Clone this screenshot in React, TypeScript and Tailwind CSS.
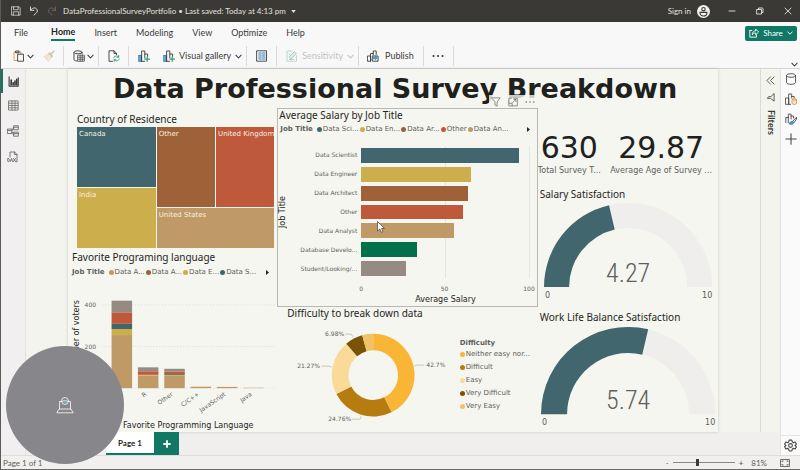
import React from "react";

const TEAL = "#41666d";
const YELLOW = "#ccae4c";
const BROWN = "#9f6138";
const RED = "#be5a3b";
const TAN = "#bf9a67";
const GREEN = "#02714b";
const GRAY = "#958b82";

type IconProps = { className?: string; children: React.ReactNode; box?: number };

function Icon({ className = "size-3", children, box = 12 }: IconProps) {
  return (
    <svg
      viewBox={`0 0 ${box} ${box}`}
      className={`${className} shrink-0`}
      fill="none"
      stroke="currentColor"
      strokeWidth="0.9"
      strokeLinecap="round"
      strokeLinejoin="round"
      aria-hidden="true"
    >
      {children}
    </svg>
  );
}

function Chevron({ className = "size-[7px]" }: { className?: string }) {
  return (
    <Icon box={8} className={className}>
      <path d="M1 2.5 4 5.7 7 2.5" strokeWidth="1.2" />
    </Icon>
  );
}

function ChartPlus() {
  return (
    <Icon>
      <rect x="0.6" y="5.5" width="3" height="5.8" fill="#5fa3d0" stroke="#3f7fae" />
      <path d="M3.6 11.3V1h3.2v7M6.8 4h2.8v2.5M3.6 11.3h3" />
      <path d="M9.2 6.8v4.6M6.9 9.1h4.6" stroke="#2f9a6c" strokeWidth="1.1" />
    </Icon>
  );
}

function TitleBar() {
  return (
    <header className="flex h-[22px] items-center bg-[#3a3936] pl-[10px] pr-2 text-[8px] text-[#e4e2de]">
      <button aria-label="Save" className="mr-2">
        <Icon className="size-[10px]">
          <path d="M1 1h8.8L11 2.2V11H1z M3 1v3.6h5.6V1 M2.8 11V7h6.4v4" />
        </Icon>
      </button>
      <button aria-label="Undo" className="mr-2">
        <Icon className="size-[10px]">
          <path d="M1.8 1.2v4h4 M2 5C4 2 7 1.6 8.8 3.2s1.6 4-.2 5.4L6 11" strokeWidth="1.1" />
        </Icon>
      </button>
      <button aria-label="Redo" className="mr-[6px] text-[#6b6a67]">
        <Icon className="size-[10px]">
          <path d="M10.2 1.2v4h-4 M10 5C8 2 5 1.6 3.2 3.2s-1.6 4 .2 5.4L6 11" strokeWidth="1.1" />
        </Icon>
      </button>
      <button className="flex items-center gap-[5px] whitespace-nowrap">
        <span>DataProfessionalSurveyPortfolio • Last saved: Today at 4:13 pm</span>
        <svg viewBox="0 0 6 4" className="h-[3px] w-[5px]" aria-hidden="true">
          <path d="M0 0h6L3 4z" fill="currentColor" />
        </svg>
      </button>
      <button className="ml-auto flex items-center gap-[6px]">
        <span>Sign in</span>
        <svg viewBox="0 0 13 13" className="size-[13px]" aria-hidden="true">
          <circle cx="6.5" cy="6.5" r="6.5" fill="#f4f3f0" />
          <circle cx="6.5" cy="4.2" r="1.7" fill="none" stroke="#3a3936" strokeWidth="1.1" />
          <path d="M3 7.4h7c0 2.4-1.5 3.6-3.5 3.6S3 9.8 3 7.4z" fill="none" stroke="#3a3936" strokeWidth="1.1" />
        </svg>
      </button>
      <button aria-label="Minimize" className="ml-[18px]">
        <Icon className="size-2" box={8}>
          <path d="M1 4h6" />
        </Icon>
      </button>
      <button aria-label="Restore" className="ml-5">
        <Icon className="size-2" box={8}>
          <path d="M1 2.5h4.500V7H1z M2.5 2.5V1h4A.6.6 0 0 1 7 1.500v4H5.500" />
        </Icon>
      </button>
      <button aria-label="Close" className="ml-5">
        <Icon className="size-2" box={8}>
          <path d="M1 1l6 6M7 1 1 7" />
        </Icon>
      </button>
    </header>
  );
}

function RibbonTabs() {
  return (
    <div className="flex h-[22px] items-center bg-[#f8f8f9] pl-[13px] pr-[3px] text-[9px] text-[#3b3a38]">
      <nav className="flex gap-[19px]">
        <button>File</button>
        <button className="ml-1 border-b-2 border-[#117865] font-bold text-[#252423]">Home</button>
        <button>Insert</button>
        <button>Modeling</button>
        <button>View</button>
        <button>Optimize</button>
        <button>Help</button>
      </nav>
      <button className="ml-auto flex h-[15px] w-[52px] items-center justify-center gap-1 rounded-xs bg-[#117865] text-[8px] text-white">
        <Icon className="size-[10px]">
          <path d="M1 3v8h8V8.500M1 3h2.500M4 8c0-3 1.500-4.500 4-4.500V1.200L11.500 4.800 8 8.200V6C6 6 5 6.500 4 8z" strokeWidth="1.1" />
        </Icon>
        Share
        <Chevron className="size-[6px]" />
      </button>
    </div>
  );
}

function Group({ className, children }: { className: string; children: React.ReactNode }) {
  return <div className={`flex h-5 items-center border-r border-[#dcdbd9] ${className}`}>{children}</div>;
}

function Ribbon() {
  return (
    <div className="flex h-[25px] items-center border-b border-[#d5d4d1] bg-[#f8f8f9] text-[9px] text-[#3b3a38]">
      <Group className="gap-[9px] pl-3 pr-2">
        <button aria-label="Paste" className="flex items-center gap-[2px]">
          <Icon>
            <path d="M4.500 10.500H1V2h7v2" stroke="#d8953f" />
            <path d="M3 1h3v1.800H3z M5 4.200h5.500v7H5z" />
          </Icon>
          <Chevron />
        </button>
        <button aria-label="Format painter">
          <Icon>
            <path d="M11 1 8 4M6.500 3l3 3M5.500 3.800l3.200 3.200" stroke="#c6c4bf" strokeWidth="1.3" />
            <path d="M5.300 4.200 1 6.500l4.300 4.800L8.300 7.200z M3 8l2-1" stroke="#e6d8b9" fill="#f5ead2" />
          </Icon>
        </button>
      </Group>
      <Group className="pl-[9px] pr-1">
        <button aria-label="Get data" className="flex items-center gap-[2px]">
          <Icon>
            <path d="M1 2.500v7C1 10.500 2.500 11 4 11M9 4V2.500" />
            <ellipse cx="5" cy="2.3" rx="4" ry="1.5" />
            <path d="M5 5.200h6.400v6H5zM5 7.200h6.400M5 9.200h6.400M7.200 5.200v6M9.300 5.200v6" strokeWidth="0.7" />
          </Icon>
          <Chevron />
        </button>
      </Group>
      <Group className="pl-[9px] pr-2">
        <button aria-label="Refresh">
          <Icon>
            <path d="M4.500 11.300H1V.8h5L8.500 3.300V4.500M6 .8v2.700h2.500" />
            <path d="M5.800 7.600C6.500 5.500 9.500 5.300 10.700 7.200V5.500M11.200 9c-.7 2.200-3.700 2.500-5 .7v1.600M10.700 7.200H9M6.200 9.700h1.700" stroke="#2f9a6c" />
          </Icon>
        </button>
      </Group>
      <Group className="gap-[13px] pl-[9px] pr-1">
        <button aria-label="New visual">
          <ChartPlus />
        </button>
        <button className="flex items-center gap-1">
          <ChartPlus />
          Visual gallery
          <Chevron />
        </button>
      </Group>
      <Group className="pl-[9px] pr-2">
        <button aria-label="Text box">
          <Icon>
            <path d="M1 .8h9.500v10.400H1z" />
            <path d="M2.800 3h2.400M6.500 3H9M2.800 5h2.400M6.500 5H9M2.800 7h2.400M6.500 7H9M2.800 9h2.400M6.500 9H9" stroke="#2c7cb5" strokeWidth="1.2" />
          </Icon>
        </button>
      </Group>
      <Group className="pl-[9px] pr-1 text-[#c3c2c0]">
        <button disabled className="flex items-center gap-1">
          <Icon>
            <path d="M10.500 5.500v5.700H1V1h5" stroke="#b5d6c9" />
            <path d="M3.200 6.800 8.500 1.500l2 2-5.300 5.300zM3 4l1.500 1.500M3.500 9.500h4" stroke="#a5cdbd" fill="#dcebe5" />
          </Icon>
          Sensitivity
          <Chevron />
        </button>
      </Group>
      <Group className="pl-2 pr-[9px]">
        <button className="flex items-center gap-[6px]">
          <Icon>
            <path d="M.8 6h2.700v5.200H.8zM3.500 11.200V3.500h2.700M6.200 5V1h3v3.500" />
            <path d="M5.700 6h5.400v5.200H5.700z" />
            <path d="M4.800 9.800c.2-2 1.500-2.800 3.400-2.800V5.600l2.300 2.300L8.200 10V8.700c-1.500 0-2.500.2-3.400 1.100z" fill="#4b9ec9" stroke="#37799c" strokeWidth="0.5" />
          </Icon>
          Publish
        </button>
      </Group>
      <Group className="pl-2 pr-[9px]">
        <button aria-label="More options">
          <Icon>
            <path d="M1.500 6h.1M6 6h.1M10.500 6h.1" strokeWidth="2" />
          </Icon>
        </button>
      </Group>
      <button aria-label="Collapse ribbon" className="ml-auto mr-[2px] self-end">
        <Chevron />
      </button>
    </div>
  );
}

function LeftRail() {
  return (
    <nav className="flex w-[25px] shrink-0 flex-col items-center gap-[14px] border-r border-[#e4e2e1] bg-[#f1efef] text-[#6d6b69]">
      <div className="flex h-[24px] w-full items-center border-l-2 border-[#117865] pl-[5px]">
        <button aria-label="Report view" className="text-[#3b3a38]">
          <Icon className="size-[11px]">
            <path d="M1.200 1v10h10V2" strokeWidth="1.2" />
            <path d="M3.500 9.500v-5M5.600 9.500v-2M7.600 9.500V5.500M9.600 9.500V3.500" strokeWidth="1.8" />
          </Icon>
        </button>
      </div>
      <button aria-label="Table view" className="-mt-[7px]">
        <Icon className="size-[11px]">
          <path d="M1 1h10v10H1zM1 3.500h10M1 6h10M1 8.500h10M4.300 1v10M7.700 1v10" />
        </Icon>
      </button>
      <button aria-label="Model view">
        <Icon className="size-3">
          <path d="M.8 4h4v4.500h-4zM.8 5.500h4M7 .8h4.300v4H7zM7 2.200h4.300M7 7.200h4.300v4H7zM7 8.600h4.300M4.800 5H6V2.800h1M4.800 7.500H6v2h1" />
        </Icon>
      </button>
      <button aria-label="DAX query view">
        <Icon className="size-3">
          <path d="M3 6V1h4.500L10 3.500V10.800H9M7.500 1v2.500H10" />
          <path d="M.8 7.500v3h.8c1.600 0 1.600-3 0-3zM3.500 10.500l1-3 1 3M6.500 7.500l2 3M8.500 7.500l-2 3" />
        </Icon>
      </button>
    </nav>
  );
}

function Legend({ items, className = "" }: { items: [string, string][]; className?: string }) {
  return (
    <div className={`flex items-center text-[7px] leading-[10px] text-[#605e5c] ${className}`}>
      <b className="mr-1 whitespace-nowrap">Job Title</b>
      <ul className="flex flex-1 gap-px">
        {items.map(([label, color], i) => (
          <li key={i} className="flex items-center whitespace-nowrap">
            <i className="mr-px size-[5px] rounded-full" style={{ backgroundColor: color }} />
            {label}
          </li>
        ))}
      </ul>
      <button aria-label="Next legend items">
        <svg viewBox="0 0 3 5" className="h-[5px] w-[3px]" aria-hidden="true">
          <path d="M0 0l3 2.500L0 5z" fill="#252423" />
        </svg>
      </button>
    </div>
  );
}

const visualTitle = "font-['Noto_Sans',sans-serif] text-[10px] leading-[12px] text-[#252423] whitespace-nowrap";

function Treemap() {
  const cell = "pl-[2px] pt-[2px]";
  return (
    <section className="pl-[9px] pr-[3px] pt-[7px]">
      <h2 className={visualTitle}>Country of Residence</h2>
      <div className="mt-[2px] grid h-[121px] grid-cols-[79fr_118fr] gap-px text-[7px] leading-[10px] text-[#f3efe2]">
        <div className="grid grid-rows-2 gap-px">
          <div className={`${cell} bg-[#41666d]`}>Canada</div>
          <div className={`${cell} bg-[#ccae4c]`}>India</div>
        </div>
        <div className="grid grid-rows-[2fr_1fr] gap-px">
          <div className="grid grid-cols-2 gap-px">
            <div className={`${cell} bg-[#9f6138]`}>Other</div>
            <div className={`${cell} whitespace-nowrap bg-[#be5a3b]`}>United Kingdom</div>
          </div>
          <div className={`${cell} bg-[#bf9a67]`}>United States</div>
        </div>
      </div>
    </section>
  );
}

const LANGUAGES: { name: string; parts: [number, string][] }[] = [
  { name: "Python", parts: [[255, TAN], [29, YELLOW], [25, TEAL], [55, RED], [56, GRAY]] },
  { name: "R", parts: [[60, TAN], [4, YELLOW], [17, RED], [19, GRAY]] },
  { name: "Other", parts: [[59, TAN], [4, YELLOW], [4, TEAL], [12, RED], [14, GRAY]] },
  { name: "C/C++", parts: [[7, TAN]] },
  { name: "JavaScript", parts: [[6, TAN]] },
  { name: "Java", parts: [[2, TAN]] },
];

function LanguageChart() {
  const base = 111;
  const unit = 0.208;
  return (
    <section>
      <h2 className={`${visualTitle} mt-[3px] pl-1`}>Favorite Programing language</h2>
      <Legend
        className="mt-1 pl-1 pr-2"
        items={[["Data A...", TAN], ["Data A...", BROWN], ["Data E...", YELLOW], ["Data S...", TEAL]]}
      />
      <svg viewBox="0 0 209 153" className="block w-full" fontSize="6" fill="#605e5c">
        {[0, 200, 400].map((v) => (
          <g key={v}>
            <line x1="34" x2="206" y1={base - v * unit} y2={base - v * unit} stroke="#d6d5cf" strokeWidth="0.7" strokeDasharray="1 2" />
            <text x="28" y={base - v * unit + 2} textAnchor="end">{v}</text>
          </g>
        ))}
        {LANGUAGES.map((lang, i) => {
          let sum = 0;
          const x = 43.5 + i * 26.3;
          return (
            <g key={lang.name}>
              {lang.parts.map(([v, color], k) => {
                sum += v;
                return <rect key={k} x={x} y={base - sum * unit} width="20.5" height={v * unit} fill={color} />;
              })}
              <text transform={`translate(${x + 9} ${base + 7}) rotate(-35)`} textAnchor="end">{lang.name}</text>
            </g>
          );
        })}
        <text transform="translate(11 58) rotate(-90)" textAnchor="middle" fontSize="8" fill="#252423">Number of voters</text>
        <text x="120" y="151" textAnchor="middle" fontSize="8" fill="#252423">Favorite Programming Language</text>
      </svg>
    </section>
  );
}

const SALARIES: [string, number, string][] = [
  ["Data Scientist", 93.7, TEAL],
  ["Data Engineer", 65, YELLOW],
  ["Data Architect", 63.6, BROWN],
  ["Other", 60.6, RED],
  ["Data Analyst", 55.3, TAN],
  ["Database Develo...", 33.3, GREEN],
  ["Student/Looking/...", 26.6, GRAY],
];

function SalaryChart() {
  return (
    <section className="relative mt-[2px] border border-[#b9b8b4] pb-px">
      <div className="absolute -top-[14px] right-0 flex h-[13px] items-center gap-[7px] bg-[#f5f6ef]/80 px-[2px] text-[#6d6b69]">
        <button aria-label="Filters on this visual">
          <Icon className="size-[10px]">
            <path d="M1 1h10L7.300 6v5L4.700 9.500V6z" />
          </Icon>
        </button>
        <button aria-label="Focus mode">
          <Icon className="size-[10px]">
            <path d="M7 1.500h4.200v9.200H1V5M1 7.500h4v3.200M5.500 6.500l4-3.500M7 3h2.500v2.300M1 5V1.500h3" />
          </Icon>
        </button>
        <button aria-label="More options">
          <Icon className="size-[10px]">
            <path d="M1.500 6h.1M6 6h.1M10.500 6h.1" strokeWidth="1.8" />
          </Icon>
        </button>
      </div>
      <h2 className={`${visualTitle} pl-px`}>Average Salary by Job Title</h2>
      <Legend
        className="mt-[3px] pl-[2px] pr-[7px]"
        items={[["Data Sci...", TEAL], ["Data En...", YELLOW], ["Data Ar...", BROWN], ["Other", RED], ["Data An...", TAN]]}
      />
      <div className="mt-3 flex">
        <div className="flex h-[132px] w-[10px] items-center justify-center text-[8px] text-[#252423]">
          <span className="rotate-180 whitespace-nowrap [writing-mode:vertical-rl]">Job Title</span>
        </div>
        <div className="flex-1 pr-[7px]">
          <ul className="grid h-[132px] grid-rows-7 text-[6px] leading-[10px] text-[#605e5c]">
            {SALARIES.map(([name, value, color]) => (
              <li key={name} className="flex items-center">
                <span className="w-[69px] whitespace-nowrap text-right">{name}</span>
                <span className="ml-1 h-full flex-1 bg-[linear-gradient(90deg,transparent_50%,#e6e5df_50%,#e6e5df_calc(50%+1px),transparent_calc(50%+1px),transparent_calc(100%-1px),#e6e5df_calc(100%-1px))] py-[2px]">
                  <span className="block h-full" style={{ width: `${value}%`, backgroundColor: color }} />
                </span>
              </li>
            ))}
          </ul>
          <div className="mt-[6px] grid grid-cols-3 pl-[71px] text-[6px] leading-[10px] text-[#605e5c]">
            <span>0</span>
            <span className="text-center">50</span>
            <span className="-mr-[5px] text-right">100</span>
          </div>
          <div className="pl-[73px] text-center text-[8px] leading-[11px] text-[#252423]">Average Salary</div>
        </div>
      </div>
    </section>
  );
}

function arc(cx: number, cy: number, r1: number, r0: number, a0: number, a1: number) {
  const p = (r: number, a: number) => `${(cx + r * Math.sin(a)).toFixed(2)} ${(cy - r * Math.cos(a)).toFixed(2)}`;
  const big = a1 - a0 > Math.PI ? 1 : 0;
  return `M${p(r1, a0)}A${r1} ${r1} 0 ${big} 1 ${p(r1, a1)}L${p(r0, a1)}A${r0} ${r0} 0 ${big} 0 ${p(r0, a0)}Z`;
}

const DIFFICULTY: [string, number, string][] = [
  ["Neither easy nor...", 42.7, "#f9b535"],
  ["Difficult", 24.76, "#b77c10"],
  ["Easy", 21.27, "#f9da98"],
  ["Very Difficult", 6.98, "#7b5104"],
  ["Very Easy", 4.29, "#f0c266"],
];

function DifficultyChart() {
  let start = 0;
  return (
    <section>
      <h2 className={`${visualTitle} pl-[10px]`}>Difficulty to break down data</h2>
      <div className="flex pr-1">
        <svg viewBox="0 0 182 110" className="block min-w-0 flex-1" fontSize="6" fill="#605e5c">
          {DIFFICULTY.map(([name, share, color]) => {
            const a0 = (start / 100) * 2 * Math.PI;
            start += share;
            return <path key={name} d={arc(96, 56, 41.3, 24.7, a0, (start / 100) * 2 * Math.PI)} fill={color} />;
          })}
          <path d="M137 47l3-1h7M76 18l-2-3h-6M54.500 48l-3-1h-7M84 97l-1 3h-8" fill="none" stroke="#bcbab4" strokeWidth="0.8" />
          <text x="149" y="48">42.7%</text>
          <text x="67" y="17" textAnchor="end">6.98%</text>
          <text x="43" y="49" textAnchor="end">21.27%</text>
          <text x="74" y="102" textAnchor="end">24.76%</text>
        </svg>
        <div className="w-[74px] pt-[19px] text-[7px] text-[#605e5c]">
          <b className="block leading-[10px]">Difficulty</b>
          <ul>
            {DIFFICULTY.map(([name, , color]) => (
              <li key={name} className="flex items-center whitespace-nowrap leading-[13px]">
                <i className="mr-px size-[5px] shrink-0 rounded-full" style={{ backgroundColor: color }} />
                {name}
              </li>
            ))}
          </ul>
        </div>
      </div>
    </section>
  );
}

type GaugeProps = { title: string; value: number; radius: number; hole: number; top: number; height: number };

function Gauge({ title, value, radius, hole, top, height }: GaugeProps) {
  const cy = top + radius;
  const a = -Math.PI / 2 + (value / 10) * Math.PI;
  return (
    <section>
      <h2 className={`${visualTitle} pl-[2px]`}>{title}</h2>
      <svg viewBox={`0 0 180 ${height}`} className="block w-full" fill="#605e5c">
        <path d={arc(90, cy, radius, hole, -Math.PI / 2, Math.PI / 2)} fill="#efeeec" />
        <path d={arc(90, cy, radius, hole, -Math.PI / 2, a)} fill={TEAL} />
        <text x="90" y={cy - 5} textAnchor="middle" fontSize="26" className="font-['Roboto_Condensed','Roboto',sans-serif] font-light">{value}</text>
        <text x={91 - radius} y={cy + 11} fontSize="8">0</text>
        <text x={90 + radius} y={cy + 11} fontSize="8" textAnchor="end">10</text>
      </svg>
    </section>
  );
}

function ReportPage() {
  return (
    <article className="flex-1 bg-[#f5f6ef] font-['DejaVu_Sans',Verdana,sans-serif] shadow-[0_0_3px_rgba(0,0,0,0.18)]">
      <h1 className="h-[37px] whitespace-nowrap pl-1 text-center text-[27px] font-bold leading-[39px] text-[#20201d]">
        Data Professional Survey Breakdown
      </h1>
      <div className="grid grid-cols-[209fr_260fr_180fr]">
        <div className="min-w-0">
          <Treemap />
          <LanguageChart />
        </div>
        <div className="min-w-0">
          <SalaryChart />
          <DifficultyChart />
        </div>
        <div className="min-w-0">
          <div className="flex justify-between pr-[6px] pt-[24px] text-center text-[8px] text-[#605e5c]">
            <div>
              <div className="text-[30px] leading-[36px] text-[#20201d]">630</div>
              <div className="whitespace-nowrap leading-[10px]">Total Survey T...</div>
            </div>
            <div>
              <div className="text-[30px] leading-[36px] text-[#20201d]">29.87</div>
              <div className="whitespace-nowrap leading-[10px]">Average Age of Survey ...</div>
            </div>
          </div>
          <div className="pt-3">
            <Gauge title="Salary Satisfaction" value={4.27} radius={84} hole={59} top={3} height={111} />
            <Gauge title="Work Life Balance Satisfaction" value={5.74} radius={87} hole={61} top={4} height={107} />
          </div>
        </div>
      </div>
    </article>
  );
}

function RightPanes() {
  return (
    <aside className="flex w-5 shrink-0 flex-col items-center gap-2 border-l border-[#e4e3e0] bg-[#fafafa] pt-1 text-[#4a4947]">
      <button aria-label="Data">
        <Icon>
          <ellipse cx="6" cy="2.5" rx="4.5" ry="1.8" />
          <path d="M1.500 2.500v7c0 2.400 9 2.400 9 0v-7" />
        </Icon>
      </button>
      <button aria-label="Build visual">
        <Icon>
          <path d="M.8 5h2.900v6.300H.8zM3.700 11.300V1h3v4M6.700 3.500h2.500V5M3.700 11.300h2" />
          <path d="M7 6.500c0-1.200 4.400-1.200 4.400 0v4c0 1.200-4.400 1.200-4.400 0z M7 6.500c0 1 4.400 1 4.400 0" stroke="#e08a45" fill="#fbe6d2" />
        </Icon>
      </button>
      <button aria-label="Format visual">
        <Icon>
          <path d="M.8 9.500V4.500h2.500v5M3.300 4.500V1.200h2.800V6M6.100 3h2.500v2" />
          <path d="M11.300 4.500 7 9M11.300 4.500l.3 1.500-3 4" />
          <path d="M7.800 8.500c-2-.8-2.500 1.500-4 2 1.500 1.300 4.500 1 4.800-.8z" fill="#4b9ec9" stroke="#37799c" />
        </Icon>
      </button>
      <button aria-label="Add pane">
        <Icon>
          <path d="M6 .8v10.400M.8 6h10.400" strokeWidth="1.1" />
        </Icon>
      </button>
      <button aria-label="Settings" className="mt-auto w-full border-t border-[#e4e3e0] py-[3px] pl-[3px]">
        <Icon className="size-[13px]" box={24}>
          <g strokeWidth="2">
            <path d="M9.500 2h5l.8 3.500 2 1.200 3.400-1.100 2.300 4-2.600 2.400 2.600 2.400-2.300 4-3.400-1.100-2 1.200-.8 3.500h-5l-.8-3.500-2-1.200-3.400 1.100-2.300-4L3.600 12 1 9.600l2.300-4 3.400 1.100 2-1.200z" />
            <circle cx="12" cy="12" r="3.5" />
          </g>
        </Icon>
      </button>
    </aside>
  );
}

function StatusBar() {
  return (
    <footer className="flex h-[15px] items-center border-b border-t border-b-[#6d6b69] border-t-[#dedddb] bg-[#f1f0ee] pl-[2px] pr-[10px] text-[8px] leading-[12px] text-[#605e5c]">
      <span>Page 1 of 1</span>
      <div className="ml-auto flex items-center gap-1">
        <button aria-label="Zoom out">-</button>
        <input
          type="range"
          aria-label="Zoom"
          min={10}
          max={190}
          defaultValue={81}
          className="h-[7px] w-[62px] appearance-none bg-[linear-gradient(#8a8886,#8a8886)] bg-[length:100%_1px] bg-center bg-no-repeat [&::-webkit-slider-thumb]:h-[7px] [&::-webkit-slider-thumb]:w-[3px] [&::-webkit-slider-thumb]:appearance-none [&::-webkit-slider-thumb]:bg-[#3b3a38]"
        />
        <button aria-label="Zoom in" className="font-bold">+</button>
      </div>
      <span className="ml-2">81%</span>
      <button aria-label="Fit to page" className="ml-[13px]">
        <svg viewBox="0 0 10 8" className="h-2 w-[10px]" fill="none" stroke="#605e5c" strokeWidth="0.9" aria-hidden="true">
          <path d="M.5.5h9v7h-9zM2 3V2h1.500M6.500 2H8v1M8 5v1H6.500M3.500 6H2V5" />
        </svg>
      </button>
    </footer>
  );
}

export default function App() {
  return (
    <div className="relative flex min-h-screen flex-col border-l border-[#5b5a58] bg-[#f0efed] font-['Lato','Noto_Sans',sans-serif]">
      <TitleBar />
      <RibbonTabs />
      <Ribbon />
      <div className="flex flex-1">
        <LeftRail />
        <div className="flex min-w-0 flex-1 flex-col">
          <div className="flex flex-1 bg-[#f4f4ef]">
            <main className="flex flex-1 px-[42px]">
              <ReportPage />
            </main>
            <aside className="flex w-5 shrink-0 flex-col items-center gap-2 border-l border-[#dcdbd6] pt-[7px] text-[#3b3a38]">
              <button aria-label="Expand filters" className="flex">
                <Icon className="size-[9px]" box={10}>
                  <path d="M5 1 1 5l4 4M9 1 5 5l4 4" />
                </Icon>
              </button>
              <Icon className="size-[9px]" box={10}>
                <path d="M9 1v8L5 6H1.500L3 4h2z" />
              </Icon>
              <span className="text-[9px] font-bold leading-[12px] [writing-mode:vertical-rl]">Filters</span>
            </aside>
          </div>
          <div className="flex h-[23px] pl-20 text-[8px] font-bold">
            <button className="w-[48px] border-b-2 border-[#117865] bg-white text-[#252423]">Page 1</button>
            <button aria-label="New page" className="flex w-[25px] items-center justify-center bg-[#117865] text-white">
              <Icon className="size-2" box={8}>
                <path d="M4 1v6M1 4h6" strokeWidth="1.8" />
              </Icon>
            </button>
          </div>
        </div>
        <RightPanes />
      </div>
      <StatusBar />
      <div className="absolute bottom-[6px] left-[5px] flex size-[118px] items-center justify-center rounded-full bg-[#87868b] text-[#f0efed]">
        <Icon className="size-[18px]" box={18}>
          <path d="M3.500 13V5.500h3M11.500 5.500h3V13M1 16.500l2-3.500h12l2 3.500z" />
          <circle cx="9" cy="5" r="3.5" />
          <path d="M7 4.500h4M7.500 6h3" stroke="#a9d3ee" />
        </Icon>
      </div>
      <svg viewBox="0 0 8 12" className="absolute left-[376px] top-[221px] h-3 w-2" aria-hidden="true">
        <path d="M.5.5v9.500l2.300-2 1.500 3.300 1.600-.7L4.500 7.500h3z" fill="#fff" stroke="#444" strokeWidth="0.7" />
      </svg>
    </div>
  );
}
